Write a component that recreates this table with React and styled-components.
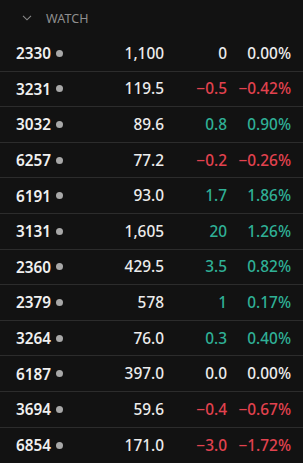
import React from 'react'
import styled, { createGlobalStyle } from 'styled-components'

const Global = createGlobalStyle`
  body {
    margin: 0;
    background: #121212;
    font-family: "Noto Sans", "Open Sans", sans-serif;
  }
`

const Panel = styled.div`
  width: 303px;
  background: #121212;
  color: #ececec;
`

const Header = styled.div`
  height: 36px;
  display: flex;
  align-items: center;
  padding-left: 22px;
  gap: 14px;
  color: #8f8f8f;
  font-size: 12.5px;
  letter-spacing: 0.1px;
  text-transform: uppercase;
`

const Row = styled.div`
  height: 35.6px;
  box-sizing: border-box;
  display: grid;
  grid-template-columns: minmax(0, 1fr) 70px 63px 64px;
  align-items: center;
  padding: 0 12px 0 16px;
  border-bottom: 1px solid #2c2c2c;
  font-size: 15.4px;
  font-weight: 500;

  &:last-child {
    border-bottom: none;
  }
`

const Symbol = styled.div`
  display: flex;
  align-items: center;
  gap: 5px;
  font-weight: 600;
  font-size: 15.3px;
  color: #f0f0f0;
`

const Dot = styled.span`
  width: 7px;
  height: 7px;
  border-radius: 50%;
  background: #a8a8a8;
`

const Num = styled.div`
  text-align: right;
  white-space: nowrap;
  color: ${p => (p.$tone === 'up' ? '#2fb096' : p.$tone === 'down' ? '#e2424f' : '#ececec')};
`

const rows = [
  ['2330', '1,100', '0', '0.00%'],
  ['3231', '119.5', '−0.5', '−0.42%'],
  ['3032', '89.6', '0.8', '0.90%'],
  ['6257', '77.2', '−0.2', '−0.26%'],
  ['6191', '93.0', '1.7', '1.86%'],
  ['3131', '1,605', '20', '1.26%'],
  ['2360', '429.5', '3.5', '0.82%'],
  ['2379', '578', '1', '0.17%'],
  ['3264', '76.0', '0.3', '0.40%'],
  ['6187', '397.0', '0.0', '0.00%'],
  ['3694', '59.6', '−0.4', '−0.67%'],
  ['6854', '171.0', '−3.0', '−1.72%'],
]

const toneOf = c => (c.startsWith('−') ? 'down' : /[1-9]/.test(c) ? 'up' : 'flat')

const Watch = () => {
  return (
    <Panel>
      <Header>
        <svg width="10" height="6" viewBox="0 0 10 6" fill="none">
          <path d="M1 0.8 L5 4.8 L9 0.8" stroke="#8a8a8a" strokeWidth="1.1" />
        </svg>
        <span>Watch</span>
      </Header>
      {rows.map(([sym, price, chg, pct]) => {
        const tone = toneOf(chg)
        return (
          <Row key={sym}>
            <Symbol>
              {sym}
              <Dot />
            </Symbol>
            <Num>{price}</Num>
            <Num $tone={tone}>{chg}</Num>
            <Num $tone={tone}>{pct}</Num>
          </Row>
        )
      })}
    </Panel>
  )
}

export default function App() {
  return (
    <>
      <Global />
      <Watch />
    </>
  )
}
